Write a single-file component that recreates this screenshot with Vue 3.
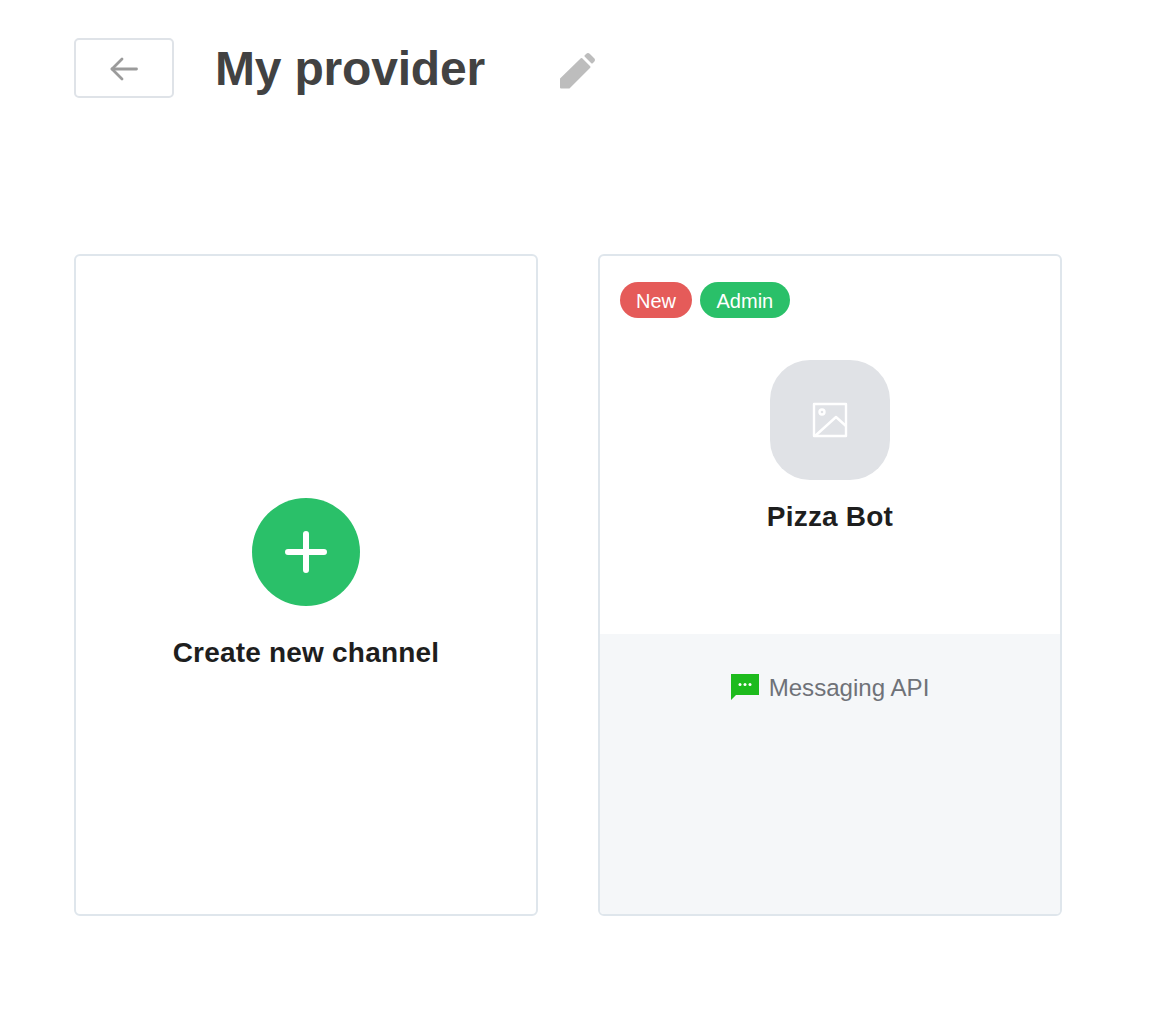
<script setup>
const badges = [
  { label: 'New', tone: 'red' },
  { label: 'Admin', tone: 'green' }
]
</script>

<template>
  <div class="page">
    <header class="head">
      <button class="back" aria-label="Back">
        <svg class="arrow" width="30" height="24" viewBox="0 0 30 24" fill="none" stroke="#9b9b9b" stroke-width="2.800" stroke-linecap="round" stroke-linejoin="round">
          <path d="M27.500 12H3" />
          <path d="M13 2 3 12l10 10" />
        </svg>
      </button>
      <h1 class="title">My provider</h1>
      <svg class="pencil" width="36" height="36" viewBox="0 0 36 36" fill="#bdbdbd" stroke="#bdbdbd" stroke-width="2" stroke-linejoin="round">
        <path d="M2 26 22.500 6l8 8L10 34.500H2z" />
        <path d="M26.500 3 28 1.500a1.500 1.500 0 0 1 2 0l4.500 4.500a1.500 1.500 0 0 1 0 2L33 9.500z" />
      </svg>
    </header>

    <main class="cards">
      <section class="card create">
        <div class="plus">
          <svg width="42" height="42" viewBox="0 0 42 42" fill="none" stroke="#fff" stroke-width="6" stroke-linecap="round">
            <path d="M21 3v36M3 21h36" />
          </svg>
        </div>
        <div class="name">Create new channel</div>
      </section>

      <section class="card channel">
        <div class="top">
          <div class="badges">
            <span v-for="b in badges" :key="b.label" class="badge" :class="b.tone">{{ b.label }}</span>
          </div>
          <div class="avatar">
            <svg width="36" height="36" viewBox="0 0 36 36" fill="none" stroke="#fff" stroke-width="2.400" stroke-linejoin="round">
              <rect x="2" y="2" width="32" height="32" />
              <circle cx="10" cy="10" r="2.500" />
              <path d="M3 34 24 15l10 9" />
            </svg>
          </div>
          <div class="name bot">Pizza Bot</div>
        </div>
        <div class="bottom">
          <svg width="28" height="26" viewBox="0 0 28 26" class="msg">
            <path fill="#1dbb1d" d="M0 0h28v21H5l-5 5z" />
            <circle cx="9" cy="10.500" r="1.500" fill="#fff" />
            <circle cx="14" cy="10.500" r="1.500" fill="#fff" />
            <circle cx="19" cy="10.500" r="1.500" fill="#fff" />
          </svg>
          <span class="type">Messaging API</span>
        </div>
      </section>
    </main>
  </div>
</template>

<style>
html, body { margin: 0; background: #fff; }
</style>

<style scoped>
.page {
  width: 1176px;
  height: 1012px;
  box-sizing: border-box;
  padding: 38px 0 0 74px;
  font-family: "Liberation Sans", Arial, sans-serif;
  overflow: hidden;
}
.head { display: flex; align-items: center; height: 60px; }
.back {
  width: 100px;
  height: 60px;
  box-sizing: border-box;
  border: 2px solid #dfe3e8;
  border-radius: 5px;
  background: #fff;
  padding: 0;
  display: flex;
  align-items: center;
  justify-content: center;
}
.arrow { margin-top: 2px; }
.title {
  margin: 2px 0 0 41px;
  font-size: 48px;
  line-height: 60px;
  font-weight: 700;
  letter-spacing: -0.2px;
  color: #424242;
  width: 345px;
}
.pencil { margin: 5px 0 0 -1px; }
.cards { display: flex; gap: 60px; margin-top: 156px; }
.card {
  width: 464px;
  height: 662px;
  box-sizing: border-box;
  border: 2px solid #dfe6ec;
  border-radius: 6px;
  background: #fff;
  display: flex;
  flex-direction: column;
  overflow: hidden;
}
.create { align-items: center; padding-top: 242px; }
.plus {
  width: 108px;
  height: 108px;
  border-radius: 50%;
  background: #2ac069;
  display: flex;
  align-items: center;
  justify-content: center;
}
.name {
  font-size: 28px;
  line-height: 36px;
  font-weight: 700;
  letter-spacing: 0.2px;
  color: #1e1e1e;
  margin-top: 29px;
}
.top {
  height: 378px;
  flex: none;
  box-sizing: border-box;
  padding: 26px 20px 0;
  display: flex;
  flex-direction: column;
  align-items: center;
}
.badges { display: flex; gap: 8px; align-self: flex-start; }
.badge {
  height: 36px;
  padding: 0 16px;
  border-radius: 18px;
  color: #fff;
  font-size: 20px;
  line-height: 38px;
}
.green.badge { padding: 0 16.500px; }
.red { background: #e55b59; }
.green { background: #2ac069; }
.avatar {
  width: 120px;
  height: 120px;
  margin-top: 42px;
  border-radius: 40px;
  background: #e0e2e6;
  display: flex;
  align-items: center;
  justify-content: center;
}
.bot { margin-top: 19px; }
.bottom {
  flex: 1;
  background: #f5f7f9;
  display: flex;
  align-items: flex-start;
  justify-content: center;
  padding-top: 39px;
}
.msg { margin-top: 1px; }
.type {
  margin-left: 10px;
  font-size: 24.100px;
  line-height: 30px;
  color: #6f7278;
}
</style>
